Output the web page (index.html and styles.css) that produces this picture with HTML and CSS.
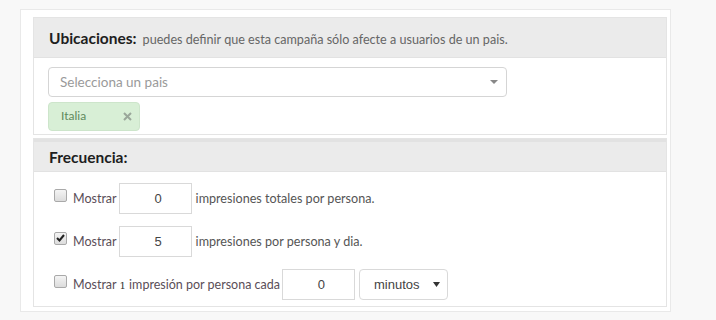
FILE: index.html
```html
<!DOCTYPE html>
<html lang="es">
<head>
<meta charset="utf-8">
<link rel="stylesheet" href="styles.css">
</head>
<body>
<div class="panel">
  <section class="box">
    <div class="box-head">
      <span class="title">Ubicaciones:</span>
      <span class="sub">puedes definir que esta campaña sólo afecte a usuarios de un pais.</span>
    </div>
    <div class="box-body loc">
      <div class="select2">
        <span class="ph">Selecciona un pais</span>
        <svg class="caret" width="8" height="5" viewBox="0 0 8 5"><path d="M0 0h8L4 4z" fill="#888"/></svg>
      </div>
      <div class="tag">
        <span>Italia</span>
        <svg class="x" width="9" height="9" viewBox="0 0 9 9"><path d="M1 1l7 7M8 1L1 8" stroke="#9aa79a" stroke-width="2"/></svg>
      </div>
    </div>
  </section>
  <section class="box second">
    <div class="box-head">
      <span class="title">Frecuencia:</span>
    </div>
    <div class="box-body freq">
      <div class="row">
        <span class="cb"></span>
        <span class="lbl">Mostrar</span>
        <span class="num">0</span>
        <span class="txt">impresiones totales por persona.</span>
      </div>
      <div class="row">
        <span class="cb checked"><svg width="9" height="8" viewBox="0 0 9 8"><path d="M1 4l2.5 2.5L8 1" stroke="#222" stroke-width="2" fill="none"/></svg></span>
        <span class="lbl">Mostrar</span>
        <span class="num">5</span>
        <span class="txt">impresiones por persona y dia.</span>
      </div>
      <div class="row">
        <span class="cb"></span>
        <span class="lbl">Mostrar <span class="one">1</span> impresión por persona cada</span>
        <span class="num">0</span>
        <span class="unit">minutos <svg width="7" height="5" viewBox="0 0 7 5"><path d="M0 0h7L3.5 5z" fill="#333"/></svg></span>
      </div>
    </div>
  </section>
</div>
</body>
</html>
```

FILE: styles.css
```css
html, body {
  margin: 0;
  padding: 0;
  background: #f8f8f8;
  font-family: Lato, "Open Sans", sans-serif;
  color: #555;
}

.panel {
  margin: 9px 0 0 20px;
  width: 634px;
  height: 290px;
  padding: 7px 3px 4px 12px;
  background: #fff;
  border: 1px solid #e9e9e9;
  overflow: hidden;
  display: flex;
  flex-direction: column;
  gap: 3px;
}

.box {
  border: 1px solid #e4e4e4;
  background: #fff;
}

.box-head {
  background: #ebebeb;
  border-bottom: 1px solid #e2e2e2;
  height: 40px;
  box-sizing: border-box;
  padding: 11px 0 0 15px;
  display: flex;
  align-items: baseline;
  gap: 6px;
}

.second .box-head {
  height: 33px;
  padding-top: 6px;
  border-top: 3px solid #e2e2e2;
}

.title {
  font-size: 15.5px;
  font-weight: 700;
  color: #1e1e1e;
}

.sub {
  font-size: 12.6px;
  color: #666;
}

.box-body {
  padding: 0 0 0 14px;
}

.loc {
  padding-top: 9px;
  padding-bottom: 3px;
  display: flex;
  flex-direction: column;
  gap: 5px;
}

.select2 {
  height: 28px;
  border: 1px solid #d5d5d5;
  border-radius: 4px;
  display: flex;
  align-items: center;
  justify-content: space-between;
  padding: 0 8px 0 11px;
  box-sizing: content-box;
  width: 438px;
}

.ph {
  font-size: 13.5px;
  color: #9a9a9a;
}

.tag {
  width: 92px;
  height: 29px;
  box-sizing: border-box;
  padding: 0 7px 0 12px;
  background: #d8efd6;
  border: 1px solid #cde5cb;
  border-radius: 4px;
  display: flex;
  align-items: center;
  justify-content: space-between;
  font-size: 12px;
  color: #5f8a5c;
}

.tag span {
  margin-top: -3px;
}

.freq {
  padding: 11px 0 6px 20px;
  display: flex;
  flex-direction: column;
  gap: 12px;
}

.row {
  display: flex;
  align-items: center;
  height: 31px;
  font-size: 12.5px;
  color: #5a4e58;
}

.cb {
  width: 11px;
  height: 11px;
  border: 1px solid #a9a9a9;
  border-radius: 2px;
  background: linear-gradient(#f4f4f4, #dcdcdc);
  margin: -7px 6px 0 0;
  display: flex;
  align-items: center;
  justify-content: center;
}

.lbl {
  font-size: 12.5px;
  margin-right: 2px;
}

.one {
  font-family: "DejaVu Serif", serif;
  font-size: 10px;
  color: #333;
}

.num {
  box-sizing: border-box;
  width: 73px;
  height: 31px;
  padding-left: 6px;
  border: 1px solid #d9d9d9;
  display: flex;
  align-items: center;
  justify-content: center;
  font-family: "Liberation Sans", Arial, sans-serif;
  font-size: 13px;
  color: #444;
  margin-right: 4px;
}

.txt {
  font-size: 12.6px;
  color: #555;
}

.unit {
  box-sizing: border-box;
  width: 89px;
  height: 31px;
  border: 1px solid #d9d9d9;
  border-radius: 4px;
  display: flex;
  align-items: center;
  justify-content: space-between;
  padding: 0 7px 0 14px;
  font-family: "Liberation Sans", Arial, sans-serif;
  font-size: 13px;
  color: #444;
}
```
